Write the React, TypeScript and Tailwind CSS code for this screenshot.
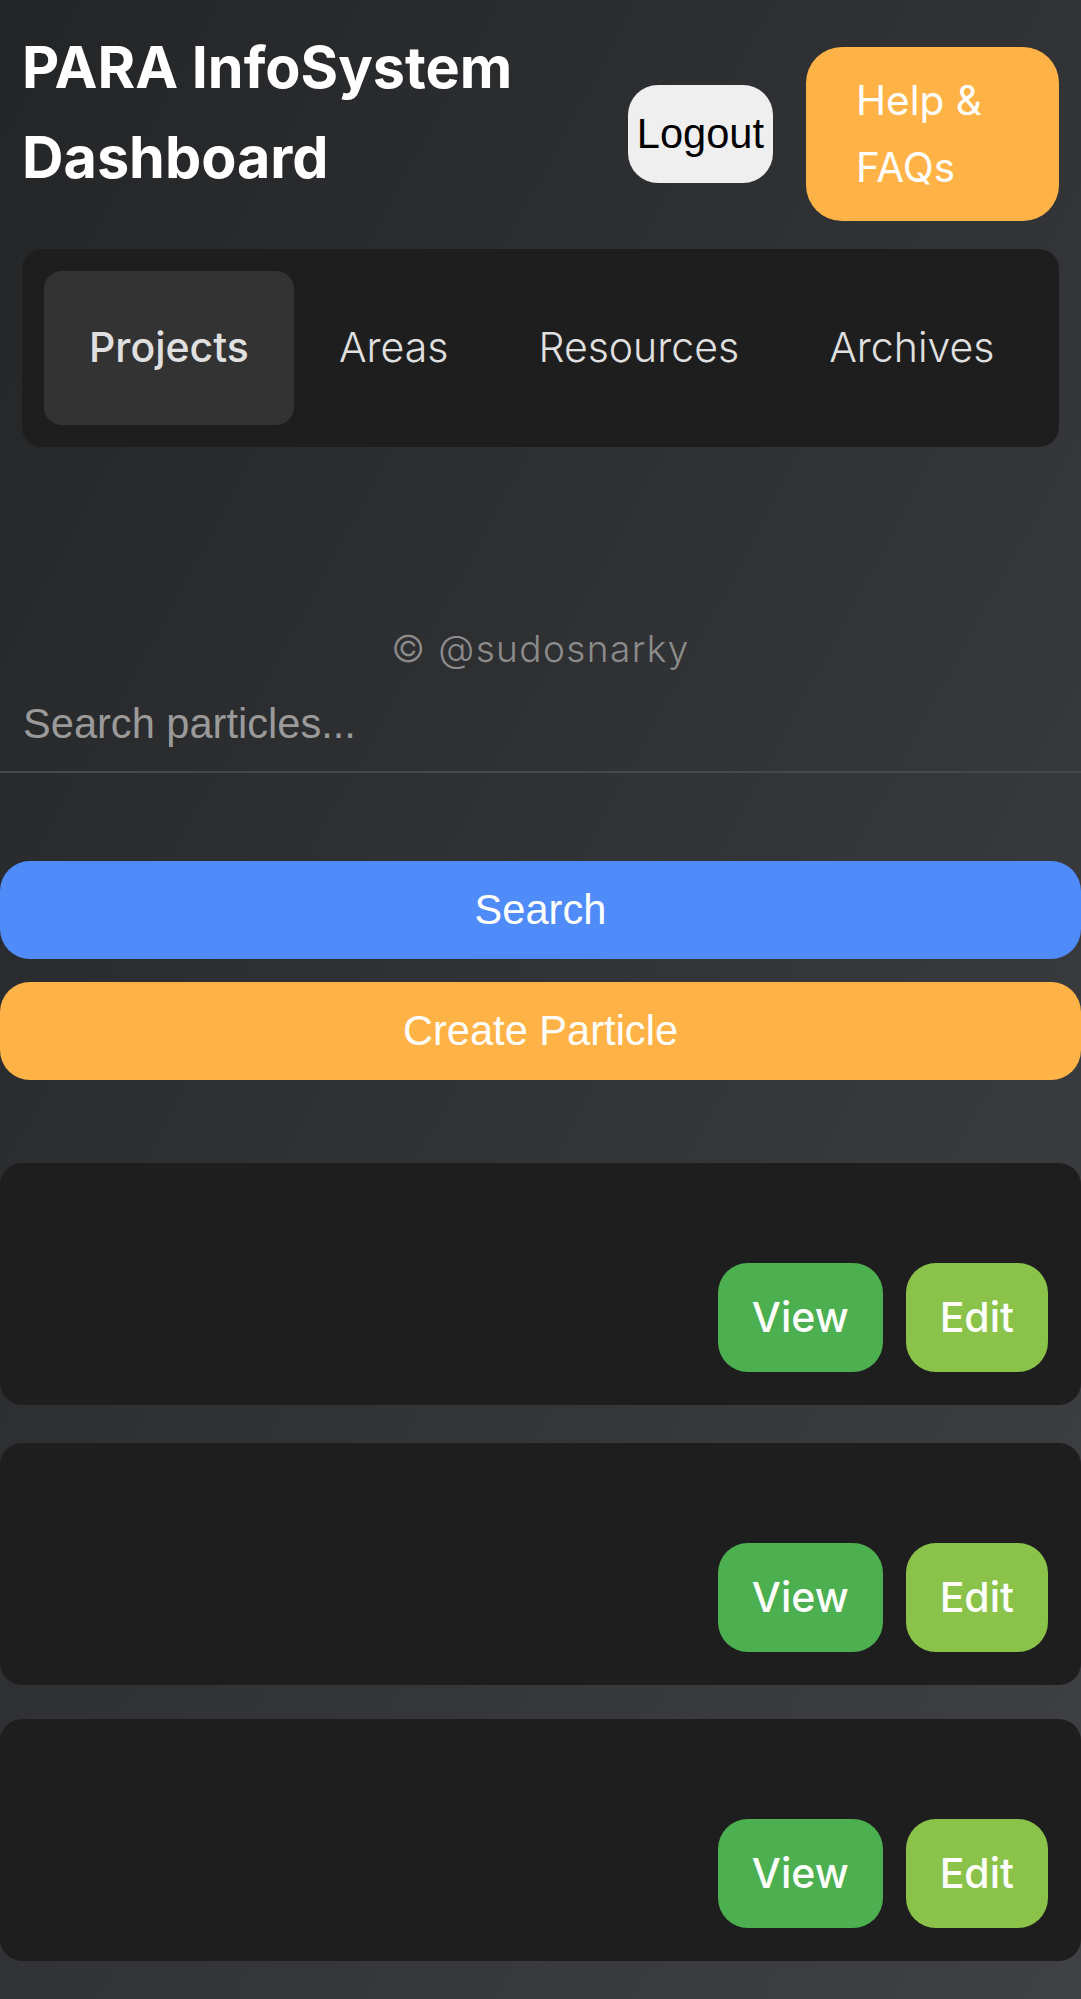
const inter = "font-['Inter',sans-serif]";
const arial = "font-['Liberation_Sans',Arial,sans-serif]";

const tabs = ['Projects', 'Areas', 'Resources', 'Archives'];

function ParticleCard({ className = '' }: { className?: string }) {
    return (
        <div className={`h-[242px] bg-[#1e1e1e] rounded-[22px] pt-[100px] pb-[33px] px-[33px] flex justify-end items-start gap-[23px] ${className}`}>
            <button className={`${inter} h-[109px] px-[34px] rounded-[30px] bg-[#4caf50] text-white text-[41px] font-medium`}>
                View
            </button>
            <button className={`${inter} h-[109px] px-[34px] rounded-[30px] bg-[#8bc34a] text-white text-[41px] font-medium`}>
                Edit
            </button>
        </div>
    );
}

export default function App() {
    return (
        <div className="min-h-screen bg-linear-to-br from-[#242527] to-[#404144] pb-[36px]">
            {/* Header */}
            <header className="flex items-start justify-between pt-[22px] px-[22px]">
                <h1 className={`${inter} text-[57.5px] leading-[90px] font-bold text-white`}>
                    PARA InfoSystem Dashboard
                </h1>
                <div className="flex items-center gap-[33px] mt-[25px] shrink-0">
                    <button className={`${arial} h-[98px] px-[9px] rounded-[30px] bg-[#efefef] text-black text-[41.6px]`}>
                        Logout
                    </button>
                    <button className={`${inter} w-[253px] py-[20px] pl-[50px] pr-[40px] rounded-[36px] bg-[#ffb347] text-white text-[40.5px] leading-[67px] text-left`}>
                        Help &amp; FAQs
                    </button>
                </div>
            </header>

            {/* Tabs */}
            <nav className="mx-[22px] mt-[28px] p-[22px] bg-[#1e1e1e] rounded-[20px] flex">
                {tabs.map((t, i) => (
                    <button
                        key={t}
                        className={
                            i === 0
                                ? `${inter} h-[154px] px-[45px] rounded-[18px] bg-[#333333] text-[#e0e0e0] text-[41px] font-medium`
                                : `${inter} h-[154px] px-[45px] rounded-[18px] text-[#e0e0e0] text-[41px] font-light`
                        }
                    >
                        {t}
                    </button>
                ))}
            </nav>

            <p className={`${inter} mt-[174px] text-center text-[37px] leading-[55px] font-light tracking-[1.4px] text-[#8c8c8c]`}>
                © @sudosnarky
            </p>

            {/* Search */}
            <input
                type="text"
                placeholder="Search particles..."
                className={`${arial} block w-full h-[97px] pl-[23px] bg-transparent border-b-2 border-[#47484b] text-[41.6px] text-white placeholder:text-[#9a9a9a] outline-none`}
            />

            <div className="mt-[88px] flex flex-col gap-[23px]">
                <button className={`${arial} h-[98px] w-full rounded-[30px] bg-[#4f8bf9] text-white text-[41.6px]`}>
                    Search
                </button>
                <button className={`${arial} h-[98px] w-full rounded-[30px] bg-[#ffb347] text-white text-[41.6px]`}>
                    Create Particle
                </button>
            </div>

            <div className="mt-[83px] flex flex-col">
                <ParticleCard />
                <ParticleCard className="mt-[38px]" />
                <ParticleCard className="mt-[34px]" />
            </div>
        </div>
    );
}
